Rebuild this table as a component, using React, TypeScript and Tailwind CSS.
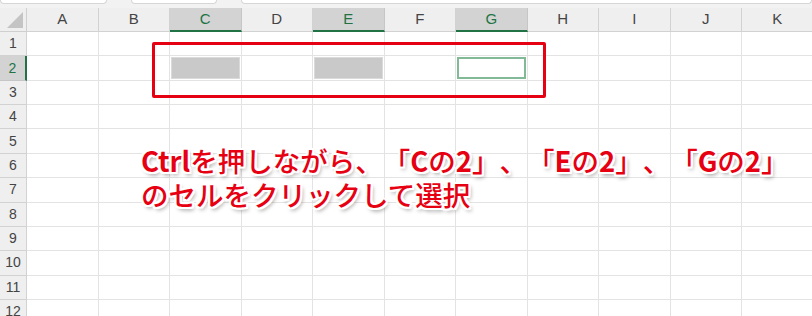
const cols = ['A', 'B', 'C', 'D', 'E', 'F', 'G', 'H', 'I', 'J', 'K'];
const rows = [1, 2, 3, 4, 5, 6, 7, 8, 9, 10, 11, 12];
const picked = ['C', 'E', 'G'];

const outline =
  '[text-shadow:2px_0_0_#fff,-2px_0_0_#fff,0_2px_0_#fff,0_-2px_0_#fff,2px_2px_0_#fff,-2px_-2px_0_#fff,2px_-2px_0_#fff,-2px_2px_0_#fff,2px_3px_4px_rgba(0,0,0,0.45)]';

function Cell({ col, row }: { col: string; row: number }) {
  const sel = row === 2 && (col === 'C' || col === 'E');
  const active = row === 2 && col === 'G';
  return (
    <div className="h-[24.36px] border-r border-b border-[#e3e3e3] bg-white p-px">
      {sel && <div className="h-full w-full border border-[#dadada] bg-[#c9c9c9]" />}
      {active && <div className="h-full w-full border-2 border-[#82b996] bg-white" />}
    </div>
  );
}

export default function App() {
  return (
    <div className="relative h-[316px] w-[812px] overflow-hidden bg-white font-['Noto_Sans_CJK_JP',sans-serif]">
      {/* ribbon remnants */}
      <div className="flex h-2 gap-[24px] bg-[#f2f2f2]">
        <div className="h-[4px] w-[107px] rounded-b-md border-x border-b border-[#d6d6d6] bg-white" />
        <div className="h-[4px] w-[86px] rounded-b-md border-x border-b border-[#d6d6d6] bg-white" />
        <div className="h-[4px] flex-1 rounded-b-md border-x border-b border-[#d6d6d6] bg-white" />
      </div>

      <div className="grid grid-cols-[27px_repeat(11,71.5px)] font-['Liberation_Sans',sans-serif]">
        {/* corner */}
        <div className="relative h-6 border-r border-b border-[#cfcfcf] bg-[#efefef]">
          <div className="absolute right-[3px] bottom-[3px] h-0 w-0 border-b-[16px] border-l-[16px] border-b-[#c4c4c4] border-l-transparent" />
        </div>
        {cols.map((c) =>
          picked.includes(c) ? (
            <div
              key={c}
              className="flex h-6 items-center justify-center border-r border-b-2 border-r-[#c6c6c6] border-b-[#217346] bg-[#d3d3d3] pt-px text-[15px] text-[#217346]"
            >
              {c}
            </div>
          ) : (
            <div
              key={c}
              className="flex h-6 items-center justify-center border-r border-b border-[#d2d2d2] bg-[#efefef] text-[15px] text-[#444]"
            >
              {c}
            </div>
          )
        )}

        {rows.map((r) => (
          <div key={r} className="contents">
            {r === 2 ? (
              <div className="flex h-[24.36px] items-center justify-center border-r-2 border-b border-r-[#217346] border-b-[#c6c6c6] bg-[#d3d3d3] text-[14px] text-[#217346]">
                {r}
              </div>
            ) : (
              <div className="flex h-[24.36px] items-center justify-center border-r border-b border-[#d2d2d2] bg-[#efefef] text-[14px] text-[#444]">
                {r}
              </div>
            )}
            {cols.map((c) => (
              <Cell key={c} col={c} row={r} />
            ))}
          </div>
        ))}
      </div>

      {/* annotation box */}
      <div className="absolute top-[42px] left-[152px] h-[56px] w-[394px] rounded-[2px] border-[3.5px] border-[#e50012]" />

      {/* annotation text */}
      <div
        className={`absolute top-[143px] left-[141px] text-[27.5px] leading-[34px] font-medium whitespace-nowrap text-[#e60012] [text-spacing-trim:space-all] ${outline}`}
      >
        <div>
          <span className="font-bold">Ctrl</span>を押しながら、「<span className="font-bold">C</span>の
          <span className="font-bold">2</span>」、「<span className="font-bold">E</span>の
          <span className="font-bold">2</span>」、「<span className="font-bold">G</span>の
          <span className="font-bold">2</span>」
        </div>
        <div>のセルをクリックして選択</div>
      </div>
    </div>
  );
}
